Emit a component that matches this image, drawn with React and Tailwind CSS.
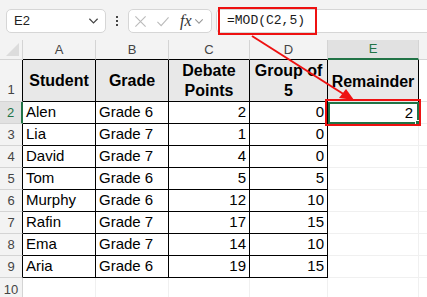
import React from "react";

const ROWS = [
  ["Alen", "Grade 6", 2, 0],
  ["Lia", "Grade 7", 1, 0],
  ["David", "Grade 7", 4, 0],
  ["Tom", "Grade 6", 5, 5],
  ["Murphy", "Grade 6", 12, 10],
  ["Rafin", "Grade 7", 17, 15],
  ["Ema", "Grade 7", 14, 10],
  ["Aria", "Grade 6", 19, 15],
];

const COLS = ["A", "B", "C", "D", "E"];

function Chevron({ className }) {
  return (
    <svg viewBox="0 0 12 8" className={className} fill="none" stroke="currentColor" strokeWidth="1.3">
      <path d="M1.5 1.5 L6 6 L10.5 1.5" />
    </svg>
  );
}

export default function App() {
  return (
    <div className="relative w-[427px] h-[297px] overflow-hidden bg-white font-['Liberation_Sans',Arial,sans-serif] text-black">
      {/* Toolbar */}
      <div className="h-[40px] bg-[#f3f3f3] flex items-start pt-[9px]">
        <div className="ml-[6px] w-[100px] h-[24px] bg-white border border-[#d6d6d6] rounded-[5px] flex items-center justify-between pl-[7px] pr-[6px]">
          <span className="text-[13px] text-[#222]">E2</span>
          <Chevron className="w-[11px] h-[8px] text-[#444]" />
        </div>
        <div className="w-[22px] h-[24px] flex flex-col items-center justify-center gap-[2px]">
          <span className="w-[2px] h-[2px] bg-[#444]"></span>
          <span className="w-[2px] h-[2px] bg-[#444]"></span>
          <span className="w-[2px] h-[2px] bg-[#444]"></span>
        </div>
        <div className="w-[84px] h-[24px] bg-white border border-[#d6d6d6] rounded-[5px] flex items-center pl-[5px] pr-[3px] text-[#bbb]">
          <svg viewBox="0 0 14 14" className="w-[13px] h-[13px]" fill="none" stroke="currentColor" strokeWidth="1.2">
            <path d="M1.5 1.5 L12.5 12.5 M12.5 1.5 L1.5 12.5" />
          </svg>
          <svg viewBox="0 0 14 14" className="w-[14px] h-[13px] ml-[9px]" fill="none" stroke="currentColor" strokeWidth="1.2">
            <path d="M1 7.5 L5 11.5 L13 2.5" />
          </svg>
          <span className="ml-[10px] font-['Liberation_Serif',serif] italic text-[16px] text-[#333] leading-none">fx</span>
          <Chevron className="ml-[2px] w-[10px] h-[7px] text-[#999]" />
        </div>
        <div className="ml-[4px] flex-1 h-[24px] bg-white border border-[#d6d6d6] rounded-l-[5px] border-r-0 flex items-center pl-[10px]">
          <span className="font-['Liberation_Mono',monospace] text-[13px] text-[#1a1a1a]">=MOD(C2,5)</span>
        </div>
      </div>

      {/* Sheet */}
      <div className="grid grid-cols-[23px_73px_73px_81px_78px_91px_1fr] grid-rows-[20px_42px_repeat(8,22px)_40px]">
        {/* column headers */}
        <div className="bg-[#f3f3f3] border-r border-b border-[#d4d4d4] relative">
          <div className="absolute right-[3px] bottom-[3px] w-0 h-0 border-l-[13px] border-l-transparent border-b-[13px] border-b-[#dcdcdc]"></div>
        </div>
        {COLS.map((c) => (
          <div
            key={c}
            className={
              c === "E"
                ? "bg-[#e1e1e1] border-r border-[#d4d4d4] border-b-2 border-b-[#217346] flex items-center justify-center text-[13px] text-[#217346]"
                : "bg-[#f3f3f3] border-r border-[#d4d4d4] border-b border-b-black flex items-center justify-center text-[13px] text-[#444]"
            }
          >
            {c}
          </div>
        ))}
        <div className="bg-[#f3f3f3] border-b border-[#d4d4d4]"></div>

        {/* row 1 */}
        <div className="bg-[#f3f3f3] border-r border-r-black border-b border-b-[#d4d4d4] flex items-end justify-center pb-[2px] text-[13px] text-[#444]">1</div>
        <div className="bg-[#e8e8e8] border-r border-b border-black flex items-center justify-center font-bold text-[16px]">Student</div>
        <div className="bg-[#e8e8e8] border-r border-b border-black flex items-center justify-center font-bold text-[16px]">Grade</div>
        <div className="bg-[#e8e8e8] border-r border-b border-black flex items-center justify-center text-center font-bold text-[16px] leading-[20px]">Debate<br />Points</div>
        <div className="bg-[#e8e8e8] border-r border-b border-black flex items-center justify-center text-center font-bold text-[16px] leading-[20px]">Group of<br />5</div>
        <div className="bg-[#e8e8e8] border-r border-black flex items-center justify-center pt-[2px] font-bold text-[16px]">Remainder</div>
        <div className="border-b border-[#e1e1e1]"></div>

        {ROWS.map((r, i) => {
          const n = i + 2;
          const sel = n === 2;
          return (
            <React.Fragment key={n}>
              <div
                className={
                  sel
                    ? "bg-[#e1e1e1] border-r-2 border-r-[#217346] border-b border-b-[#d4d4d4] flex items-center justify-center text-[13px] text-[#217346]"
                    : "bg-[#f3f3f3] border-r border-r-black border-b border-b-[#d4d4d4] flex items-center justify-center text-[13px] text-[#444]"
                }
              >
                {n}
              </div>
              <div className="border-r border-b border-black flex items-center pl-[3px] text-[15px]">{r[0]}</div>
              <div className="border-r border-b border-black flex items-center pl-[3px] text-[15px]">{r[1]}</div>
              <div className="border-r border-b border-black flex items-center justify-end pr-[3px] text-[15px]">{r[2]}</div>
              <div className="border-r border-b border-black flex items-center justify-end pr-[3px] text-[15px]">{r[3]}</div>
              {sel ? (
                <div className="relative border-2 border-[#217346] flex items-center justify-end pr-[4px] text-[15px]">
                  2
                  <span className="absolute right-[-3px] bottom-[-3px] w-[5px] h-[5px] bg-[#217346] border border-white"></span>
                </div>
              ) : (
                <div className="border-r border-b border-[#f0f0f0]"></div>
              )}
              <div className="border-b border-[#f0f0f0]"></div>
            </React.Fragment>
          );
        })}

        {/* row 10 */}
        <div className="bg-[#f3f3f3] border-r border-[#d4d4d4] flex items-start pt-[2px] justify-center text-[13px] text-[#444]">10</div>
        <div className="border-r border-[#f0f0f0]"></div>
        <div className="border-r border-[#f0f0f0]"></div>
        <div className="border-r border-[#f0f0f0]"></div>
        <div className="border-r border-[#f0f0f0]"></div>
        <div className="border-r border-[#f0f0f0]"></div>
        <div></div>
      </div>

      {/* Red highlight boxes and arrow */}
      <div className="absolute left-[218px] top-[7px] w-[99px] h-[28px] border-2 border-[#ee1111]"></div>
      <div className="absolute left-[325px] top-[99px] w-[96px] h-[27px] border-2 border-[#ee1111]"></div>
      <svg className="absolute left-0 top-0 w-[427px] h-[297px] pointer-events-none" viewBox="0 0 427 297">
        <line x1="252" y1="36" x2="345" y2="95" stroke="#ee1111" strokeWidth="2" />
        <polygon points="354,100 339,98 346,89" fill="#ee1111" />
      </svg>
    </div>
  );
}
